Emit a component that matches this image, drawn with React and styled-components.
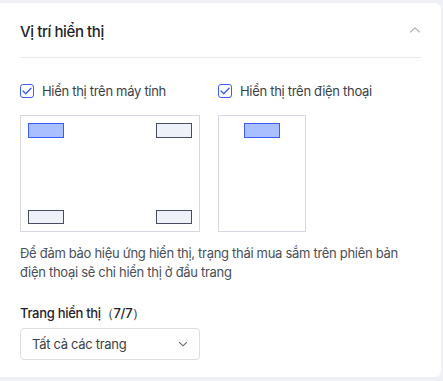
import React, { useState } from "react";
import styled, { createGlobalStyle } from "styled-components";

const Global = createGlobalStyle`
  html, body {
    margin: 0;
    padding: 0;
    background: #eef0f5;
    font-family: Inter, "Noto Sans", sans-serif;
  }
`;

const Page = styled.div`
  padding: 3px 2px 4px 0;
  width: 443px;
  height: 381px;
  box-sizing: border-box;
`;

const Card = styled.section`
  background: #fff;
  border-radius: 0 6px 6px 0;
  height: 100%;
  box-sizing: border-box;
  padding: 0 20px;
`;

const Header = styled.div`
  display: flex;
  align-items: center;
  justify-content: space-between;
  height: 54px;
  border-bottom: 1px solid #e8eaef;
`;

const Title = styled.h2`
  margin: 0;
  padding-top: 2px;
  font-size: 15px;
  font-weight: 500;
  letter-spacing: -0.4px;
  color: #1f2329;
`;

const Body = styled.div`
  padding-top: 25px;
`;

const Options = styled.div`
  display: flex;
  gap: 18px;
`;

const Option = styled.div`
  display: flex;
  flex-direction: column;
  gap: 16px;
`;

const CheckRow = styled.label`
  display: flex;
  align-items: center;
  gap: 8px;
  height: 16px;
  font-size: 13px;
  letter-spacing: -0.3px;
  color: #3a3f47;
  cursor: pointer;
`;

const Box = styled.span`
  width: 14px;
  height: 14px;
  box-sizing: border-box;
  border: 1px solid #3d5cf5;
  border-radius: 3px;
  background: #fff;
  display: flex;
  align-items: center;
  justify-content: center;
`;

const Preview = styled.div`
  width: ${p => p.$w}px;
  height: 117px;
  box-sizing: border-box;
  border: 1px solid #d6d9e4;
  padding: 7px;
  display: grid;
  grid-template-columns: ${p => (p.$mobile ? "1fr" : "36px 1fr 36px")};
  grid-template-rows: 15px 1fr 14px;
  justify-items: ${p => (p.$mobile ? "center" : "stretch")};
`;

const Slot = styled.div`
  width: 36px;
  box-sizing: border-box;
  border: 1px solid ${p => (p.$active ? "#3d5cf5" : "#474d5c")};
  background: ${p => (p.$active ? "#a9bfff" : "#eef1f8")};
  grid-column: ${p => p.$col};
  grid-row: ${p => p.$row};
`;

const Note = styled.p`
  margin: 12px 0 0;
  font-size: 13px;
  line-height: 19px;
  letter-spacing: -0.3px;
  color: #4a4f57;
`;

const FieldLabel = styled.div`
  margin-top: 23px;
  font-size: 13px;
  font-weight: 500;
  letter-spacing: -0.3px;
  color: #1f2329;
`;

const Select = styled.div`
  margin-top: 5px;
  width: 180px;
  height: 32px;
  box-sizing: border-box;
  border: 1px solid #dcdfe6;
  border-radius: 4px;
  display: flex;
  align-items: center;
  justify-content: space-between;
  padding: 0 11px 0 11px;
  font-size: 13px;
  letter-spacing: -0.3px;
  color: #3a3f47;
`;

const Check = () => (
  <svg width="10" height="8" viewBox="0 0 10 8" fill="none">
    <path d="M1 4l2.8 2.8L9 1.2" stroke="#3d5cf5" strokeWidth="1.3" strokeLinecap="round" strokeLinejoin="round" />
  </svg>
);

const Chevron = ({ up }) => (
  <svg width={up ? 12 : 10} height={up ? 8 : 6} viewBox={up ? "0 0 12 8" : "0 0 10 6"} fill="none">
    <path
      d={up ? "M1.5 6L6 1.8 10.5 6" : "M1.5 1.5l3.5 3.3 3.5-3.3"}
      stroke={up ? "#a9aebb" : "#6a707c"}
      strokeWidth="1.1"
      strokeLinecap="round"
      strokeLinejoin="round"
    />
  </svg>
);

export default function App() {
  const [desktop] = useState(true);
  const [mobile] = useState(true);

  return (
    <>
      <Global />
      <Page>
        <Card>
          <Header>
            <Title>Vị trí hiển thị</Title>
            <Chevron up />
          </Header>
          <Body>
            <Options>
              <Option>
                <CheckRow>
                  <Box>{desktop && <Check />}</Box>
                  Hiển thị trên máy tính
                </CheckRow>
                <Preview $w={180}>
                  <Slot $active $col={1} $row={1} />
                  <Slot $col={3} $row={1} />
                  <Slot $col={1} $row={3} />
                  <Slot $col={3} $row={3} />
                </Preview>
              </Option>
              <Option>
                <CheckRow>
                  <Box>{mobile && <Check />}</Box>
                  Hiển thị trên điện thoại
                </CheckRow>
                <Preview $w={88} $mobile>
                  <Slot $active $col={1} $row={1} />
                </Preview>
              </Option>
            </Options>
            <Note>
              Để đảm bảo hiệu ứng hiển thị, trạng thái mua sắm trên phiên bản
              điện thoại sẽ chỉ hiển thị ở đầu trang
            </Note>
            <FieldLabel>Trang hiển thị（7/7）</FieldLabel>
            <Select>
              Tất cả các trang
              <Chevron />
            </Select>
          </Body>
        </Card>
      </Page>
    </>
  );
}
